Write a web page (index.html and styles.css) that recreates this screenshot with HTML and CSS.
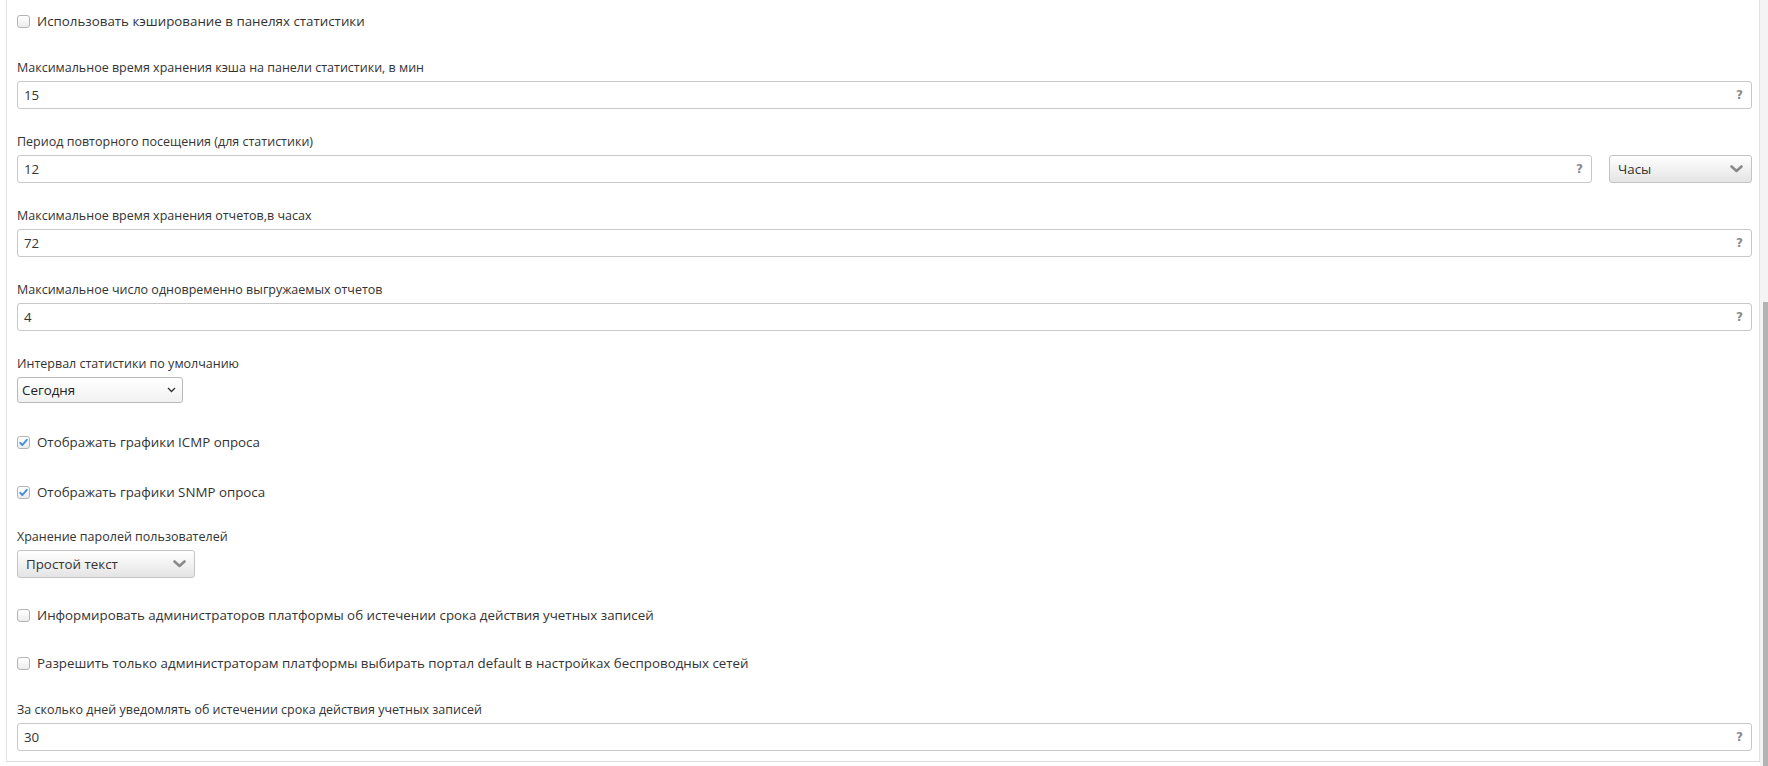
FILE: index.html
```html
<!DOCTYPE html>
<html lang="ru">
<head>
<meta charset="utf-8">
<title>Настройки статистики</title>
<link rel="stylesheet" href="styles.css">
</head>
<body>
<div class="screen">
  <div class="content">
    <div class="panel">
      <div class="check">
        <span class="box"></span>
        <span class="check-text">Использовать кэширование в панелях статистики</span>
      </div>

      <div class="field field-first">
        <div class="label">Максимальное время хранения кэша на панели статистики, в мин</div>
        <div class="input"><span class="value">15</span><span class="help">?</span></div>
      </div>

      <div class="field">
        <div class="label">Период повторного посещения (для статистики)</div>
        <div class="row">
          <div class="input grow"><span class="value">12</span><span class="help">?</span></div>
          <div class="btn-select units">
            <span class="value">Часы</span>
            <svg class="chev" width="13" height="8" viewBox="0 0 13 8"><polyline points="1.5,1.5 6.5,6 11.5,1.5" fill="none" stroke="#8a8a8a" stroke-width="2.6" stroke-linecap="round" stroke-linejoin="round"/></svg>
          </div>
        </div>
      </div>

      <div class="field">
        <div class="label">Максимальное время хранения отчетов,в часах</div>
        <div class="input"><span class="value">72</span><span class="help">?</span></div>
      </div>

      <div class="field">
        <div class="label">Максимальное число одновременно выгружаемых отчетов</div>
        <div class="input"><span class="value">4</span><span class="help">?</span></div>
      </div>

      <div class="field">
        <div class="label">Интервал статистики по умолчанию</div>
        <div class="native-select">
          <span class="value">Сегодня</span>
          <svg class="chev-small" width="9" height="6" viewBox="0 0 9 6"><polyline points="1,1 4.5,4.5 8,1" fill="none" stroke="#333" stroke-width="1.3"/></svg>
        </div>
      </div>

      <div class="check check-icmp">
        <span class="box checked"><svg width="11" height="11" viewBox="0 0 11 11"><polyline points="2.2,5.8 4.4,8 8.8,2.8" fill="none" stroke="#3f8fdc" stroke-width="1.9" stroke-linecap="round" stroke-linejoin="round"/></svg></span>
        <span class="check-text">Отображать графики ICMP опроса</span>
      </div>

      <div class="check check-snmp">
        <span class="box checked"><svg width="11" height="11" viewBox="0 0 11 11"><polyline points="2.2,5.8 4.4,8 8.8,2.8" fill="none" stroke="#3f8fdc" stroke-width="1.9" stroke-linecap="round" stroke-linejoin="round"/></svg></span>
        <span class="check-text">Отображать графики SNMP опроса</span>
      </div>

      <div class="field field-after-check">
        <div class="label">Хранение паролей пользователей</div>
        <div class="btn-select storage">
          <span class="value">Простой текст</span>
          <svg class="chev" width="13" height="8" viewBox="0 0 13 8"><polyline points="1.5,1.5 6.5,6 11.5,1.5" fill="none" stroke="#8a8a8a" stroke-width="2.6" stroke-linecap="round" stroke-linejoin="round"/></svg>
        </div>
      </div>

      <div class="check check-after-select">
        <span class="box"></span>
        <span class="check-text">Информировать администраторов платформы об истечении срока действия учетных записей</span>
      </div>

      <div class="check">
        <span class="box"></span>
        <span class="check-text">Разрешить только администраторам платформы выбирать портал default в настройках беспроводных сетей</span>
      </div>

      <div class="field field-last">
        <div class="label">За сколько дней уведомлять об истечении срока действия учетных записей</div>
        <div class="input"><span class="value">30</span><span class="help">?</span></div>
      </div>
    </div>
  </div>
  <div class="scrollbar"><div class="thumb"></div></div>
</div>
</body>
</html>
```

FILE: styles.css
```css
html, body {
  margin: 0;
  padding: 0;
  background: #ffffff;
}

body {
  font-family: "Open Sans", "Noto Sans", "DejaVu Sans", sans-serif;
  color: #333333;
  width: 1768px;
  height: 766px;
  overflow: hidden;
}

.screen {
  display: flex;
  width: 1768px;
  height: 766px;
}

.content {
  flex: 1;
  padding-left: 6px;
}

.panel {
  border-left: 1px solid #e2e2e2;
  border-right: 1px solid #e2e2e2;
  border-bottom: 1px solid #dcdcdc;
  padding: 11px 7px 10px 10px;
}

.scrollbar {
  width: 8px;
  background: #f4f4f4;
  display: flex;
  justify-content: flex-end;
}

.thumb {
  width: 5px;
  margin-top: 302px;
  height: 464px;
  background: #b3b3b3;
}

/* checkbox rows */
.check {
  display: flex;
  align-items: center;
  height: 20px;
  margin-top: 28px;
}

.panel > .check:first-child {
  margin-top: 0;
}

.check-icmp {
  margin-top: 29px;
}

.check-snmp {
  margin-top: 30px;
}

.check-after-select {
  margin-top: 27px;
}

.box {
  width: 13px;
  height: 13px;
  box-sizing: border-box;
  border: 1px solid #b4b4b4;
  border-radius: 3px;
  background: linear-gradient(#ffffff, #ececec);
  display: flex;
  align-items: center;
  justify-content: center;
  flex: none;
}

.box svg {
  display: block;
}

.check-text {
  margin-left: 7px;
  font-size: 13.33px;
  line-height: 20px;
  color: #333333;
  white-space: nowrap;
}

/* fields */
.field {
  margin-top: 24px;
}

.field-first {
  margin-top: 28px;
}

.field-after-check {
  margin-top: 26px;
}

.field-last {
  margin-top: 28px;
}

.label {
  font-size: 12.5px;
  line-height: 18px;
  margin-bottom: 4px;
  color: #333333;
  white-space: nowrap;
}

.input {
  height: 28px;
  box-sizing: border-box;
  border: 1px solid #c8c8c8;
  border-radius: 3px;
  background: #ffffff;
  display: flex;
  align-items: center;
  padding: 0 8px 0 6px;
}

.value {
  font-size: 13.33px;
  color: #333333;
  flex: 1;
  white-space: nowrap;
}

.help {
  font-family: "DejaVu Sans", sans-serif;
  font-weight: bold;
  font-size: 12px;
  color: #8a8a8a;
}

.row {
  display: flex;
  gap: 17px;
}

.grow {
  flex: 1;
}

.btn-select {
  height: 28px;
  box-sizing: border-box;
  border: 1px solid #c4c4c4;
  border-radius: 3px;
  background: linear-gradient(#ffffff, #e4e4e4);
  display: flex;
  align-items: center;
  padding: 0 8px 0 8px;
}

.btn-select .value {
  font-size: 13.33px;
  color: #333333;
}

.units {
  width: 143px;
}

.storage {
  width: 178px;
}

.chev {
  display: block;
  flex: none;
}

.native-select {
  width: 166px;
  height: 26px;
  box-sizing: border-box;
  border: 1px solid #b8b8b8;
  border-radius: 3px;
  background: linear-gradient(#ffffff, #f1f1f1);
  display: flex;
  align-items: center;
  padding: 0 6px 0 4px;
}

.native-select .value {
  font-size: 13.33px;
  color: #222222;
}

.chev-small {
  display: block;
  flex: none;
}
```
